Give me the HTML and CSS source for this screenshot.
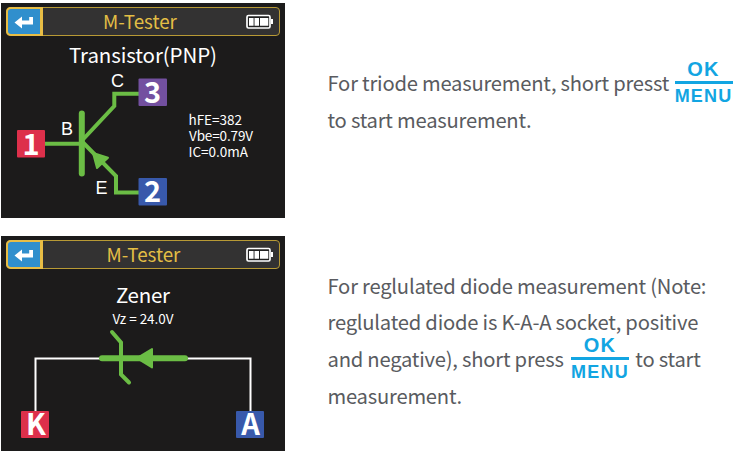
FILE: index.html
```
<!DOCTYPE html>
<html lang="en">
<head>
<meta charset="utf-8">
<title>M-Tester</title>
<link rel="stylesheet" href="styles.css">
</head>
<body>
<main class="guide">
  <section class="entry">
    <div class="screen">
      <header class="bar">
        <span class="back"><svg width="20" height="14" viewBox="0 0 20 14"><path d="M.5 7.500 8 1.500v4h7.200V2H19v7.500H8v4z" fill="#fff"/></svg></span>
        <h2 class="title">M-Tester</h2>
        <svg class="battery" width="27" height="16" viewBox="0 0 27 16"><rect x="1" y="1.500" width="23" height="12.500" rx="1.500" fill="#222" stroke="#fff" stroke-width="1.700"/><path d="M25 5h2v5h-2z" fill="#fff"/><path d="M3 4h4.600v7.800H3zM8.500 4h4.500v7.800H8.500zM14 4h8.300v7.800H14z" fill="#fff"/></svg>
      </header>
      <svg class="diagram" width="284" height="181" viewBox="1 36 284 181">
        <text class="name" x="69" y="63" textLength="148">Transistor(PNP)</text>
        <g class="wire">
          <path d="M44 143.800h38M82 140.500 114.300 106V93.800H140M82 141.500 116 176v16.500h24"/>
          <path class="plate" d="M81.800 113.500v60"/>
        </g>
        <path class="arrow" d="m93 153 15 4.800-11 10.200z"/>
        <rect x="17" y="130" width="28" height="27.500" rx="1" fill="#dd304b"/>
        <rect x="138.500" y="78.500" width="28.500" height="27.500" rx="1" fill="#7350a0"/>
        <rect x="138.500" y="178" width="28.500" height="27.500" rx="1" fill="#3859ab"/>
        <text class="pin" x="31" y="154.500">1</text>
        <text class="pin" x="152.500" y="102.800">3</text>
        <text class="pin" x="152.500" y="202.300">2</text>
        <text class="leg" x="111" y="87">C</text>
        <text class="leg" x="61" y="135">B</text>
        <text class="leg" x="95.500" y="194">E</text>
        <text class="value" x="188.500" y="125" textLength="53.500">hFE=382</text>
        <text class="value" x="189" y="141" textLength="64">Vbe=0.79V</text>
        <text class="value" x="188.500" y="157" textLength="59.500">IC=0.0mA</text>
      </svg>
    </div>
    <div class="note first">
      <p>For triode measurement, short presst <span class="key"><b>OK</b><i>MENU</i></span></p>
      <p>to start measurement.</p>
    </div>
  </section>
  <section class="entry">
    <div class="screen">
      <header class="bar">
        <span class="back"><svg width="20" height="14" viewBox="0 0 20 14"><path d="M.5 7.500 8 1.500v4h7.200V2H19v7.500H8v4z" fill="#fff"/></svg></span>
        <h2 class="title shifted">M-Tester</h2>
        <svg class="battery" width="27" height="16" viewBox="0 0 27 16"><rect x="1" y="1.500" width="23" height="12.500" rx="1.500" fill="#222" stroke="#fff" stroke-width="1.700"/><path d="M25 5h2v5h-2z" fill="#fff"/><path d="M3 4h4.600v7.800H3zM8.500 4h4.500v7.800H8.500zM14 4h8.300v7.800H14z" fill="#fff"/></svg>
      </header>
      <svg class="diagram" width="284" height="181" viewBox="1 269 284 181">
        <text class="name" x="116" y="303" textLength="54">Zener</text>
        <text class="value" x="112.500" y="324" textLength="61">Vz = 24.0V</text>
        <path class="lead" d="M35.500 412v-53.600H102M186 358.400h64.500V412"/>
        <g class="wire">
          <path class="plate" d="M102 358.200h83"/>
          <path class="cathode" d="m112 332 9 10.500v32l8 8"/>
        </g>
        <path class="arrow" d="m137 358.200 15-9.200v18.500z"/>
        <rect x="21" y="411" width="28" height="27" rx="1" fill="#dd304b"/>
        <rect x="236" y="411" width="28" height="27" rx="1" fill="#3859ab"/>
        <text class="pin" x="36" y="434.800">K</text>
        <text class="pin" x="250.500" y="434.800">A</text>
      </svg>
    </div>
    <div class="note second">
      <p>For reglulated diode measurement (Note:</p>
      <p>reglulated diode is K-A-A socket, positive</p>
      <p>and negative), short press <span class="key inner"><b>OK</b><i>MENU</i></span> to start</p>
      <p>measurement.</p>
    </div>
  </section>
</main>
</body>
</html>
```
FILE: styles.css
```
* { box-sizing: border-box; }
body {
  margin: 0;
  background: #fff;
  font-family: "Noto Sans CJK SC", "Noto Sans", sans-serif;
}
.guide {
  display: grid;
  gap: 18px;
  padding: 3px 0 0 1px;
}
.entry {
  display: grid;
  grid-template-columns: 284px 1fr;
  column-gap: 42.5px;
  height: 215px;
}
.screen {
  background: #1c1b1b;
  padding: 4px 5px 0;
  overflow: hidden;
}
.bar {
  display: flex;
  align-items: center;
  height: 29px;
  border: 1px solid #b89a35;
  border-radius: 4px;
  background: #333232;
}
.back {
  display: grid;
  place-items: center;
  width: 37px;
  height: 29px;
  margin-left: -1px;
  border: 2px solid #e8bd45;
  border-right-width: 3px;
  border-radius: 5px 0 0 5px;
  background: #308fcd;
}
.title {
  flex: 1;
  margin: 0;
  padding: 0 0 2px 60px;
  color: #e3be45;
  font-size: 18.8px;
  font-weight: 400;
  line-height: 25px;
}
.title.shifted { padding: 0 0 3px 63.5px; }
.battery { margin-right: 6px; }
.diagram { display: block; margin-left: -5px; }
.name { fill: #fff; font-size: 20.5px; }
.value { fill: #fff; font-size: 13.5px; }
.leg { fill: #fff; font: 18px "Liberation Sans", sans-serif; }
.pin { fill: #fff; font-size: 29px; font-weight: 700; text-anchor: middle; }
.wire { fill: none; stroke: #6bbd45; stroke-width: 4; }
.plate { stroke-width: 6; stroke-linecap: round; }
.cathode { stroke-linecap: round; }
.lead { fill: none; stroke: #fff; stroke-width: 2; }
.arrow { fill: #6bbd45; stroke: #6bbd45; stroke-width: 2; stroke-linejoin: round; }
.note {
  color: #595b60;
  font-size: 20.2px;
  letter-spacing: -0.22px;
  white-space: nowrap;
}
.note p { margin: 0; height: 36.7px; line-height: 36.7px; }
.first { padding-top: 62px; }
.second { padding-top: 31.5px; }
.key {
  display: inline-flex;
  flex-direction: column;
  align-items: center;
  width: 58px;
  margin: -14px 0 -10px 1px;
  vertical-align: 15px;
  color: #12a5e2;
  font-family: "Liberation Sans", sans-serif;
  font-weight: 700;
}
.key.inner { margin-left: 3px; margin-right: 2px; }
.key b {
  padding-bottom: 1px;
  font-size: 20px;
  line-height: 21px;
  letter-spacing: 1.2px;
}
.key i {
  width: 100%;
  padding-top: 1px;
  border-top: 3px solid;
  font-style: normal;
  font-size: 18px;
  line-height: 22px;
  letter-spacing: 1.2px;
  text-align: center;
}
```
